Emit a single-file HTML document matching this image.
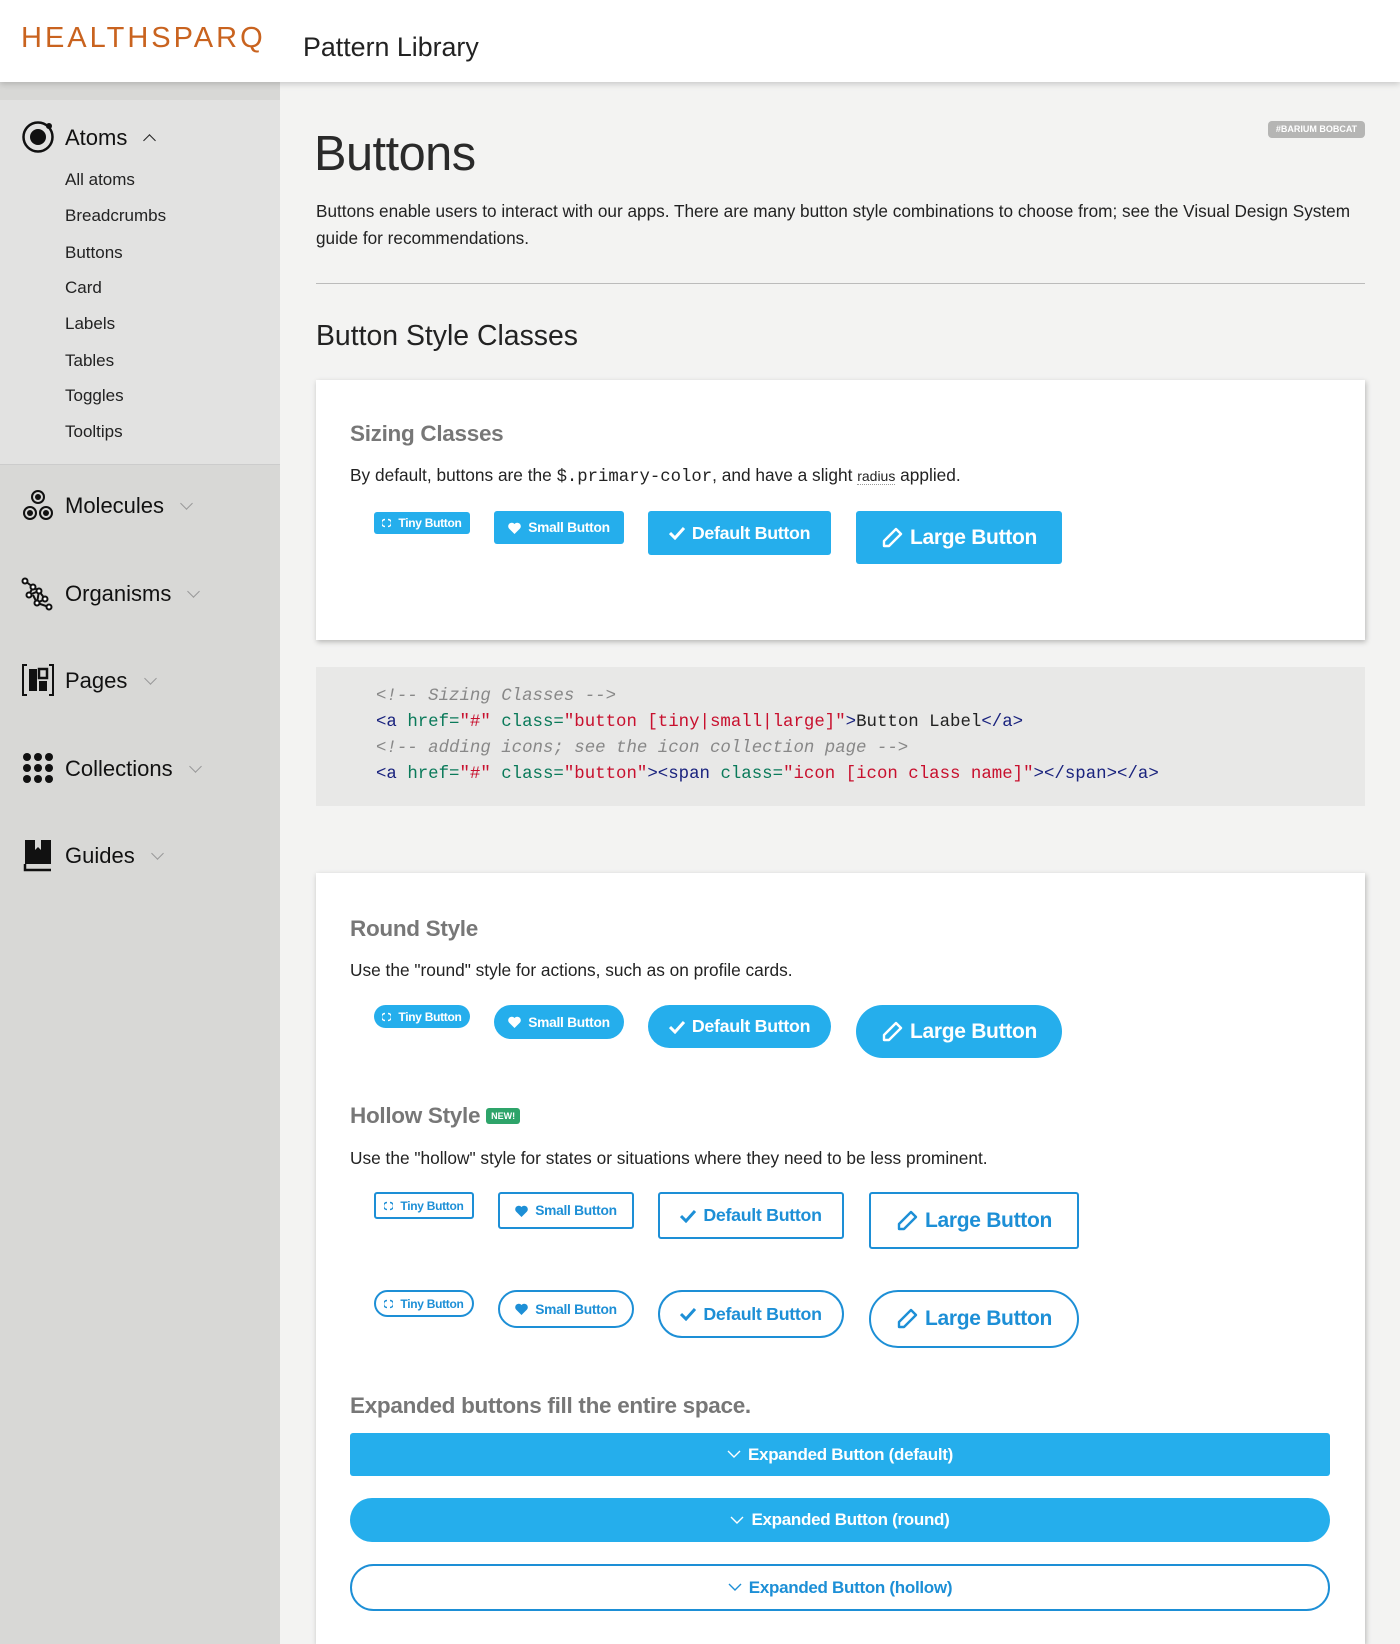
<!DOCTYPE html>
<html><head><meta charset="utf-8">
<style>
*{box-sizing:border-box;margin:0;padding:0}
html,body{width:1400px;height:1644px;overflow:hidden}
body{background:#f3f3f2;font-family:"Liberation Sans",sans-serif;color:#222;position:relative}
.a{position:absolute;white-space:nowrap}
#hdr{position:absolute;left:0;top:0;width:1400px;height:82px;background:#fff;box-shadow:0 2px 6px rgba(0,0,0,.18);z-index:3}
#side{position:absolute;left:0;top:82px;width:280px;height:1562px;background:#d8d8d6}
#atoms{position:absolute;left:0;top:100px;width:280px;height:365px;background:#e2e2e1;border-bottom:1px solid #ccc}
.sub{position:absolute;left:65px;font-size:17px;color:#222}
.nav{position:absolute;left:65px;font-size:22px;color:#111}
.chev{display:inline-block;width:9px;height:9px;border-right:1.5px solid #999;border-bottom:1.5px solid #999;transform:rotate(45deg);margin-left:12px;position:relative;top:-5px}
.ic{position:absolute;left:21px}
.card{position:absolute;left:316px;width:1049px;background:#fff;box-shadow:1px 2px 5px rgba(0,0,0,.25)}
h3{position:absolute;left:350px;font-size:22.5px;color:#777;font-weight:bold;letter-spacing:-.3px}
.p{position:absolute;left:350px;font-size:17.3px;color:#222}
.b{position:absolute;background:#25aeec;color:#fff;font-weight:bold;display:flex;align-items:center;justify-content:center;border-radius:3px;letter-spacing:-.3px}
.h{background:#fff;color:#1d8fd6;border:2px solid #1d8fd6}
.b svg{margin-right:7px}
.code{position:absolute;left:316px;top:667px;width:1049px;height:139px;background:#e8e8e7;font-family:"Liberation Mono",monospace;font-size:17.4px}
.code div{position:absolute;left:60px}
.cm{color:#888;font-style:italic}.tg{color:#1a237e}.at{color:#0a7a5a}.st{color:#c8102e}
</style></head><body>
<div id="hdr">
<div class="a" style="left:21px;top:22px;font-size:29px;letter-spacing:3px;color:#c9631f">HEALTHSPARQ</div>
<div class="a" style="left:303px;top:32px;font-size:26.8px;color:#222">Pattern Library</div>
</div>
<div id="side"></div>
<div id="atoms"></div>
<svg class="ic" style="top:120px" width="34" height="34" viewBox="0 0 34 34"><circle cx="17" cy="17" r="14.5" fill="none" stroke="#111" stroke-width="2.5"/><circle cx="17" cy="17" r="8" fill="#111"/><circle cx="28" cy="6" r="3" fill="#111"/></svg>
<div class="nav" style="top:125px">Atoms <span class="chev" style="transform:rotate(225deg);top:0px;border-color:#222"></span></div>
<div class="sub" style="top:170px">All atoms</div>
<div class="sub" style="top:206px">Breadcrumbs</div>
<div class="sub" style="top:243px">Buttons</div>
<div class="sub" style="top:278px">Card</div>
<div class="sub" style="top:314px">Labels</div>
<div class="sub" style="top:351px">Tables</div>
<div class="sub" style="top:386px">Toggles</div>
<div class="sub" style="top:422px">Tooltips</div>

<svg class="ic" style="top:489px" width="34" height="34" viewBox="0 0 34 34"><g fill="none" stroke="#111" stroke-width="2"><circle cx="17" cy="8" r="6"/><circle cx="9" cy="24" r="6"/><circle cx="25" cy="24" r="6"/></g><circle cx="17" cy="8" r="3" fill="#111"/><circle cx="9" cy="24" r="3" fill="#111"/><circle cx="25" cy="24" r="3" fill="#111"/></svg>
<div class="nav" style="top:493px">Molecules <span class="chev"></span></div>
<svg class="ic" style="top:577px" width="34" height="34" viewBox="0 0 34 34"><g fill="#fff" stroke="#111" stroke-width="2"><path d="M4 4L12 10L8 18L18 14L16 26L28 30M12 10L18 14L24 22L16 26L12 18" fill="none"/><circle cx="4" cy="4" r="2.5"/><circle cx="12" cy="10" r="2.5"/><circle cx="18" cy="14" r="2.5"/><circle cx="8" cy="18" r="2.5"/><circle cx="24" cy="22" r="2.5"/><circle cx="16" cy="26" r="2.5"/><circle cx="28" cy="30" r="2.5"/></g></svg>
<div class="nav" style="top:581px">Organisms <span class="chev"></span></div>
<svg class="ic" style="top:663px" width="34" height="34" viewBox="0 0 34 34"><path d="M6 2H2V32H6M28 2H32V32H28" fill="none" stroke="#111" stroke-width="2"/><rect x="8" y="6" width="8" height="22" fill="#111"/><rect x="18" y="6" width="8" height="9" fill="none" stroke="#111" stroke-width="2.5"/><rect x="18" y="18" width="8" height="10" fill="#111"/></svg>
<div class="nav" style="top:668px">Pages <span class="chev"></span></div>
<svg class="ic" style="top:751px" width="34" height="34" viewBox="0 0 34 34"><g fill="#111"><circle cx="6" cy="6" r="4"/><circle cx="17" cy="6" r="4"/><circle cx="28" cy="6" r="4"/><circle cx="6" cy="17" r="4"/><circle cx="17" cy="17" r="4"/><circle cx="28" cy="17" r="4"/><circle cx="6" cy="28" r="4"/><circle cx="17" cy="28" r="4"/><circle cx="28" cy="28" r="4"/></g></svg>
<div class="nav" style="top:756px">Collections <span class="chev"></span></div>
<svg class="ic" style="top:838px" width="34" height="34" viewBox="0 0 34 34"><path d="M4 2H30V26H4Z" fill="#111"/><path d="M14 2V12L17 9L20 12V2" fill="#d8d8d6"/><path d="M4 26V32H30" fill="none" stroke="#111" stroke-width="2.5"/></svg>
<div class="nav" style="top:843px">Guides <span class="chev"></span></div>

<div class="a" style="left:1268px;top:121px;width:97px;height:17px;background:#b5b5b4;border-radius:4px;color:#fff;font-size:9px;font-weight:bold;text-align:center;line-height:17px">#BARIUM BOBCAT</div>
<div class="a" style="left:314px;top:126px;font-size:48.7px;color:#2a2a2a;letter-spacing:-.5px">Buttons</div>
<div class="a" style="left:316px;top:198px;width:1055px;font-size:17.2px;line-height:27px;white-space:normal;color:#222">Buttons enable users to interact with our apps. There are many button style combinations to choose from; see the Visual Design System guide for recommendations.</div>
<div class="a" style="left:316px;top:283px;width:1049px;height:1px;background:#bbb"></div>
<div class="a" style="left:316px;top:320px;font-size:28.4px;color:#222">Button Style Classes</div>

<div class="card" style="top:380px;height:260px"></div>
<h3 style="top:421px">Sizing Classes</h3>
<div class="p" style="top:465px">By default, buttons are the <span style="font-family:'Liberation Mono',monospace">$.primary-color</span>, and have a slight <span style="font-size:14px;border-bottom:1px dotted #999">radius</span> applied.</div>

<div class="b" style="left:374px;top:512px;width:96px;height:22px;font-size:12px"><svg width="9" height="10" viewBox="0 0 9 10"><path d="M3 1.5A3.5 3.5 0 0 0 3 8.5M6 1.5A3.5 3.5 0 0 1 6 8.5" fill="none" stroke="currentColor" stroke-width="1.4"/></svg>Tiny Button</div>
<div class="b" style="left:494px;top:511px;width:130px;height:33px;font-size:13.8px"><svg width="13" height="12" viewBox="0 0 13 12"><path d="M6.5 12L1 6.5A3.2 3.2 0 0 1 6.5 2A3.2 3.2 0 0 1 12 6.5Z" fill="currentColor"/></svg>Small Button</div>
<div class="b" style="left:648px;top:511px;width:183px;height:44px;font-size:17.8px"><svg width="16" height="14" viewBox="0 0 16 14"><path d="M1 7L6 12L15 2" fill="none" stroke="currentColor" stroke-width="3"/></svg>Default Button</div>
<div class="b" style="left:856px;top:511px;width:206px;height:53px;font-size:21px"><svg width="22" height="22" viewBox="0 0 22 22"><path d="M15 2L20 7L8 19H3V14Z" fill="none" stroke="currentColor" stroke-width="2.4" stroke-linejoin="round"/></svg>Large Button</div>

<div class="code">
<div style="top:20px" class="cm">&lt;!-- Sizing Classes --&gt;</div>
<div style="top:46px"><span class="tg">&lt;a</span> <span class="at">href=</span><span class="st">"#"</span> <span class="at">class=</span><span class="st">"button [tiny|small|large]"</span><span class="tg">&gt;</span>Button Label<span class="tg">&lt;/a&gt;</span></div>
<div style="top:72px" class="cm">&lt;!-- adding icons; see the icon collection page --&gt;</div>
<div style="top:98px"><span class="tg">&lt;a</span> <span class="at">href=</span><span class="st">"#"</span> <span class="at">class=</span><span class="st">"button"</span><span class="tg">&gt;&lt;span</span> <span class="at">class=</span><span class="st">"icon [icon class name]"</span><span class="tg">&gt;&lt;/span&gt;&lt;/a&gt;</span></div>
</div>

<div class="card" style="top:873px;height:771px"></div>
<h3 style="top:916px">Round Style</h3>
<div class="p" style="top:960px">Use the "round" style for actions, such as on profile cards.</div>
<div class="b" style="left:374px;top:1005px;width:96px;height:23px;font-size:12px;border-radius:12px"><svg width="9" height="10" viewBox="0 0 9 10"><path d="M3 1.5A3.5 3.5 0 0 0 3 8.5M6 1.5A3.5 3.5 0 0 1 6 8.5" fill="none" stroke="currentColor" stroke-width="1.4"/></svg>Tiny Button</div>
<div class="b" style="left:494px;top:1005px;width:130px;height:34px;font-size:13.8px;border-radius:17px"><svg width="13" height="12" viewBox="0 0 13 12"><path d="M6.5 12L1 6.5A3.2 3.2 0 0 1 6.5 2A3.2 3.2 0 0 1 12 6.5Z" fill="currentColor"/></svg>Small Button</div>
<div class="b" style="left:648px;top:1005px;width:183px;height:43px;font-size:17.8px;border-radius:22px"><svg width="16" height="14" viewBox="0 0 16 14"><path d="M1 7L6 12L15 2" fill="none" stroke="currentColor" stroke-width="3"/></svg>Default Button</div>
<div class="b" style="left:856px;top:1005px;width:206px;height:53px;font-size:21px;border-radius:27px"><svg width="22" height="22" viewBox="0 0 22 22"><path d="M15 2L20 7L8 19H3V14Z" fill="none" stroke="currentColor" stroke-width="2.4" stroke-linejoin="round"/></svg>Large Button</div>

<h3 style="top:1103px">Hollow Style <span style="display:inline-block;background:#2ea46a;color:#fff;font-size:9px;padding:0 5px;line-height:16px;border-radius:3px;vertical-align:4px;letter-spacing:0">NEW!</span></h3>
<div class="p" style="top:1148px">Use the "hollow" style for states or situations where they need to be less prominent.</div>

<div class="b h" style="left:374px;top:1192px;width:100px;height:27px;font-size:12px"><svg width="9" height="10" viewBox="0 0 9 10"><path d="M3 1.5A3.5 3.5 0 0 0 3 8.5M6 1.5A3.5 3.5 0 0 1 6 8.5" fill="none" stroke="currentColor" stroke-width="1.4"/></svg>Tiny Button</div>
<div class="b h" style="left:498px;top:1192px;width:136px;height:37px;font-size:13.8px"><svg width="13" height="12" viewBox="0 0 13 12"><path d="M6.5 12L1 6.5A3.2 3.2 0 0 1 6.5 2A3.2 3.2 0 0 1 12 6.5Z" fill="currentColor"/></svg>Small Button</div>
<div class="b h" style="left:658px;top:1192px;width:186px;height:47px;font-size:17.8px"><svg width="16" height="14" viewBox="0 0 16 14"><path d="M1 7L6 12L15 2" fill="none" stroke="currentColor" stroke-width="3"/></svg>Default Button</div>
<div class="b h" style="left:869px;top:1192px;width:210px;height:57px;font-size:21px"><svg width="22" height="22" viewBox="0 0 22 22"><path d="M15 2L20 7L8 19H3V14Z" fill="none" stroke="currentColor" stroke-width="2.4" stroke-linejoin="round"/></svg>Large Button</div>

<div class="b h" style="left:374px;top:1290px;width:100px;height:27px;font-size:12px;border-radius:14px"><svg width="9" height="10" viewBox="0 0 9 10"><path d="M3 1.5A3.5 3.5 0 0 0 3 8.5M6 1.5A3.5 3.5 0 0 1 6 8.5" fill="none" stroke="currentColor" stroke-width="1.4"/></svg>Tiny Button</div>
<div class="b h" style="left:498px;top:1290px;width:136px;height:38px;font-size:13.8px;border-radius:19px"><svg width="13" height="12" viewBox="0 0 13 12"><path d="M6.5 12L1 6.5A3.2 3.2 0 0 1 6.5 2A3.2 3.2 0 0 1 12 6.5Z" fill="currentColor"/></svg>Small Button</div>
<div class="b h" style="left:658px;top:1290px;width:186px;height:48px;font-size:17.8px;border-radius:24px"><svg width="16" height="14" viewBox="0 0 16 14"><path d="M1 7L6 12L15 2" fill="none" stroke="currentColor" stroke-width="3"/></svg>Default Button</div>
<div class="b h" style="left:869px;top:1290px;width:210px;height:58px;font-size:21px;border-radius:29px"><svg width="22" height="22" viewBox="0 0 22 22"><path d="M15 2L20 7L8 19H3V14Z" fill="none" stroke="currentColor" stroke-width="2.4" stroke-linejoin="round"/></svg>Large Button</div>

<h3 style="top:1393px">Expanded buttons fill the entire space.</h3>
<div class="b" style="left:350px;top:1433px;width:980px;height:43px;font-size:17px"><svg width="14" height="9" viewBox="0 0 14 9"><path d="M1 1L7 7L13 1" fill="none" stroke="currentColor" stroke-width="1.4"/></svg>Expanded Button (default)</div>
<div class="b" style="left:350px;top:1498px;width:980px;height:44px;font-size:17px;border-radius:22px"><svg width="14" height="9" viewBox="0 0 14 9"><path d="M1 1L7 7L13 1" fill="none" stroke="currentColor" stroke-width="1.4"/></svg>Expanded Button (round)</div>
<div class="b h" style="left:350px;top:1564px;width:980px;height:47px;font-size:17px;border-radius:24px"><svg width="14" height="9" viewBox="0 0 14 9"><path d="M1 1L7 7L13 1" fill="none" stroke="currentColor" stroke-width="1.4"/></svg>Expanded Button (hollow)</div>
</body></html>
